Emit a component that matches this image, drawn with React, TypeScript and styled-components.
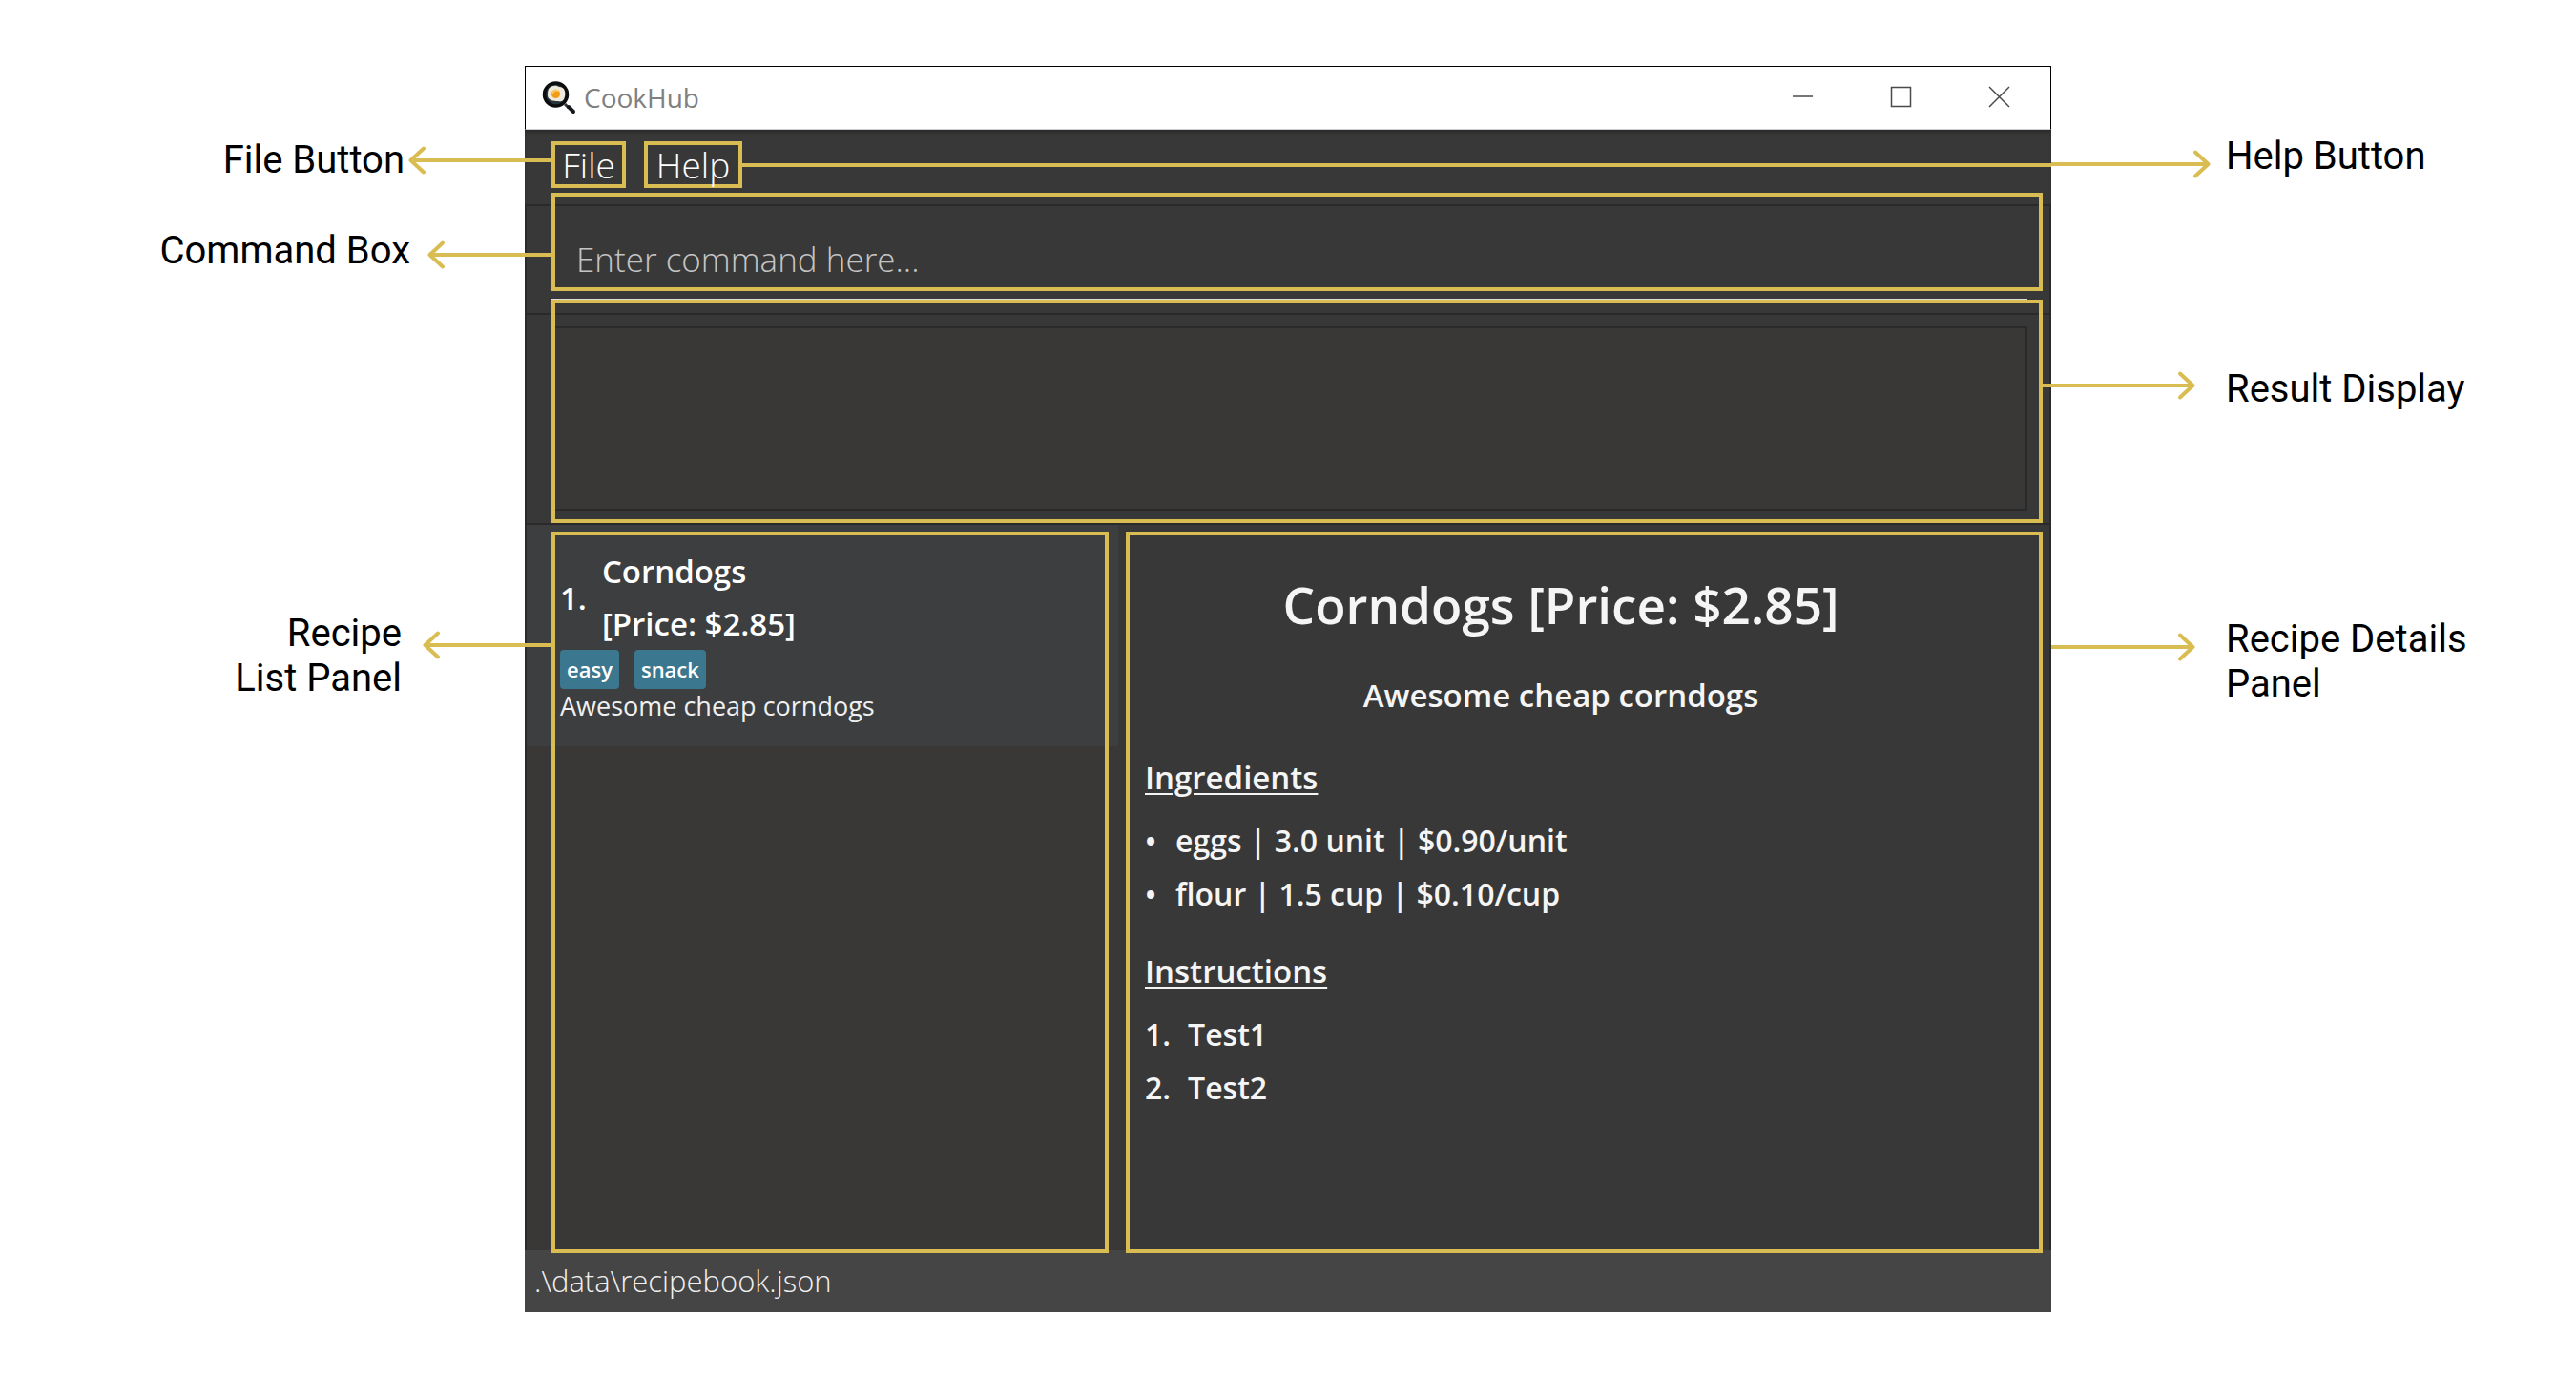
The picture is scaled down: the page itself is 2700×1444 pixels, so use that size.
import React from "react";
import styled, { createGlobalStyle } from "styled-components";

const GOLD = "#d9bd52";
const UI_FONT = `"Open Sans", "Noto Sans", sans-serif`;
const LABEL_FONT = `Roboto, "Liberation Sans", sans-serif`;

const GlobalStyle = createGlobalStyle`
  *, *::before, *::after { box-sizing: border-box; }
  body { margin: 0; background: #fff; }
  h1, h2, h3, p, ul, ol { margin: 0; padding: 0; font-size: inherit; font-weight: inherit; }
  ul, ol { list-style: none; }
  button, input, textarea { font: inherit; color: inherit; background: none; border: 0; margin: 0; padding: 0; outline: 0; }
`;

/* ---------- page and callouts ---------- */

const Page = styled.div`
  display: grid;
  grid-template-columns: 550fr 1600fr 550fr;
  min-height: 100vh;
  padding: 69px 0;
`;

const LeftNotes = styled.aside`
  display: grid;
  grid-template-rows: 95px 401px auto;
  align-content: start;
  padding-top: 75px;
  z-index: 1;
`;

const RightNotes = styled.aside`
  display: grid;
  grid-template-rows: 244px 262px auto;
  align-content: start;
  padding-top: 71px;
  z-index: 1;
`;

const Note = styled.div<{ $gap?: number }>`
  display: flex;
  align-items: flex-start;
  gap: ${(p) => p.$gap ?? 0}px;
`;

const LeftNote = styled(Note)`
  justify-content: flex-end;
  text-align: right;
`;

const NoteText = styled.p`
  font: 400 40px/47px ${LABEL_FONT};
  color: #000;
`;

const ArrowSlot = styled.div`
  flex: 0 0 183px;
  display: flex;
`;

const ArrowBox = styled.div<{ $length: number; $drop: number; $into?: number; $side: "left" | "right" }>`
  flex: none;
  display: flex;
  align-items: center;
  flex-direction: ${(p) => (p.$side === "left" ? "row" : "row-reverse")};
  width: ${(p) => p.$length + (p.$into ?? 0)}px;
  height: 32px;
  margin-top: ${(p) => p.$drop}px;
  margin-${(p) => (p.$side === "left" ? "right" : "left")}: -${(p) => p.$into ?? 0}px;

  svg {
    flex: none;
    transform: ${(p) => (p.$side === "left" ? "none" : "scaleX(-1)")};
  }
`;

const Line = styled.span`
  flex: 1;
  height: 4px;
  background: ${GOLD};
`;

type ArrowProps = { side: "left" | "right"; length: number; drop: number; into?: number };

function Arrow({ side, length, drop, into }: ArrowProps) {
  return (
    <ArrowBox $side={side} $length={length} $drop={drop} $into={into} aria-hidden>
      <svg width="18" height="32" viewBox="0 0 18 32" fill="none" stroke={GOLD} strokeWidth="4" strokeLinecap="round" strokeLinejoin="round">
        <path d="M16 3.5 2.5 16 16 28.5M3 16h15" />
      </svg>
      <Line />
    </ArrowBox>
  );
}

/* ---------- application window ---------- */

const Window = styled.main`
  display: flex;
  flex-direction: column;
  min-width: 0;
  background: #383838;
  color: #fff;
  font-family: ${UI_FONT};
`;

const TitleBar = styled.header`
  display: flex;
  align-items: center;
  height: 67px;
  padding: 0 2px 2px 17px;
  background: #fff;
  border: 1px solid #000;
  border-bottom-color: #c8ccd0;
`;

const AppName = styled.h1`
  flex: 1;
  margin-left: 8px;
  font-size: 28px;
  line-height: 40px;
  color: #808080;
`;

const WindowButton = styled.button`
  display: grid;
  place-items: center;
  width: 103px;
  height: 100%;
  color: #4a4a4a;
`;

const MenuBar = styled.nav`
  display: flex;
  align-items: center;
  height: 78px;
  padding: 0 0 5px 28px;
  box-shadow: inset 0 3px 3px #2c2c2c;
`;

const MenuButton = styled.button<{ $width: number }>`
  min-width: ${(p) => p.$width}px;
  height: 49px;
  border: 4px solid ${GOLD};
  font-size: 37px;
  line-height: 41px;
  font-weight: 300;

  & + & {
    margin-left: 19px;
  }
`;

const Pane = styled.section`
  position: relative;
  border: 2px solid #2a2a2a;
  border-bottom: 0;
`;

const Frame = styled.div<{ $inset: string }>`
  position: absolute;
  inset: ${(p) => p.$inset};
  border: 4px solid ${GOLD};
  pointer-events: none;
`;

const CommandPane = styled(Pane)`
  height: 114px;
  padding: 14px 23px 14px 26px;
`;

const CommandInput = styled.input`
  display: block;
  width: 100%;
  height: 84px;
  padding-left: 26px;
  border-bottom: 1px solid #dcdcdc;
  font-size: 35px;
  font-weight: 300;

  &::placeholder {
    color: #c4c4c4;
    opacity: 1;
  }
`;

const ResultPane = styled(Pane)`
  height: 220px;
  padding: 12px 23px 13px 26px;
`;

const ResultText = styled.textarea`
  display: block;
  width: 100%;
  height: 100%;
  border: 2px solid #2a2a2a;
  background: #393836;
  resize: none;
`;

const Split = styled.div`
  flex: 1;
  display: grid;
  grid-template-columns: 622fr 978fr;
  border-top: 2px solid #2a2a2a;
`;

const ListPanel = styled.section`
  position: relative;
  border-left: 2px solid #2a2a2a;
  background: #393836;
`;

const RecipeCard = styled.article`
  padding: 21px 12px 24px 35px;
  background: #3c3e3f;
`;

const CardHead = styled.div`
  display: flex;
  align-items: center;
  gap: 16px;
  font-size: 33px;
  line-height: 55px;
  font-weight: 600;
`;

const Tags = styled.ul`
  display: flex;
  gap: 16px;
`;

const Tag = styled.li`
  padding: 0 7px;
  border-radius: 4px;
  background: #3b778f;
  font-size: 22px;
  line-height: 41px;
  font-weight: 600;
`;

const CardText = styled.p`
  font-size: 27px;
  line-height: 36px;
  color: #f0f0f0;
`;

const DetailsPanel = styled.section`
  position: relative;
  padding: 44px 76px 44px 28px;
  border-right: 2px solid #2a2a2a;
  font-size: 33px;
  line-height: 56px;
  font-weight: 600;
  color: #f5f5f5;
`;

const RecipeTitle = styled.h2`
  font-size: 53px;
  line-height: 80px;
  text-align: center;
`;

const RecipeSummary = styled.p`
  margin: 27px 0 30px;
  text-align: center;
`;

const SectionTitle = styled.h3`
  text-decoration: underline;
  text-decoration-thickness: 2px;
  text-underline-offset: 4px;
`;

const Lines = styled.div`
  margin: 10px 0 25px;
  font-size: 32px;
`;

const Entry = styled.li<{ $gap: number }>`
  display: flex;
  gap: ${(p) => p.$gap}px;
`;

const StatusBar = styled.footer`
  height: 65px;
  padding-left: 10px;
  background: #454545;
  font-size: 31px;
  line-height: 64px;
  font-weight: 300;
  color: #f0f0f0;
`;

function PanIcon() {
  return (
    <svg width="36" height="36" viewBox="0 0 36 36" aria-hidden>
      <path d="M24 25l4 4" stroke="#33383c" strokeWidth="3" />
      <path d="M28 28l5 5" stroke="#17191b" strokeWidth="4" strokeLinecap="round" />
      <circle cx="14.500" cy="15" r="12" fill="#26343c" stroke="#0b0d0f" strokeWidth="3.500" />
      <path d="M7 9c3-4 8-4 11-2 6 0 7 6 6 10-1 5-4 6-7 5-5 0-11-1-11-6 0-2 0-5 1-7z" fill="#efe9db" />
      <circle cx="14.500" cy="14.500" r="4.500" fill="#f09a16" />
      <path d="M11.500 13c1-2 3-3 5-2" stroke="#ffc65a" strokeWidth="2" fill="none" strokeLinecap="round" />
    </svg>
  );
}

const controls = [
  { name: "Minimize", path: "M1 11h21" },
  { name: "Maximize", path: "M1.500 1.500h20v20h-20z" },
  { name: "Close", path: "M1 1l21 21M22 1L1 22" },
];

const ingredients = ["eggs | 3.0 unit | $0.90/unit", "flour | 1.5 cup | $0.10/cup"];
const instructions = ["Test1", "Test2"];

export default function App() {
  return (
    <>
      <GlobalStyle />
      <Page>
        <LeftNotes>
          <LeftNote $gap={4}>
            <NoteText>File Button</NoteText>
            <Arrow side="left" length={122} into={28} drop={8} />
          </LeftNote>
          <LeftNote $gap={18}>
            <NoteText>Command Box</NoteText>
            <Arrow side="left" length={102} into={28} drop={12} />
          </LeftNote>
          <LeftNote $gap={22}>
            <NoteText>
              Recipe
              <br />
              List Panel
            </NoteText>
            <Arrow side="left" length={107} into={28} drop={20} />
          </LeftNote>
        </LeftNotes>

        <Window>
          <TitleBar>
            <PanIcon />
            <AppName>CookHub</AppName>
            {controls.map((c) => (
              <WindowButton key={c.name} type="button" aria-label={c.name}>
                <svg width="23" height="23" viewBox="0 0 23 23" fill="none" stroke="currentColor" strokeWidth="1.500">
                  <path d={c.path} />
                </svg>
              </WindowButton>
            ))}
          </TitleBar>

          <MenuBar>
            <MenuButton type="button" $width={78}>
              File
            </MenuButton>
            <MenuButton type="button" $width={103}>
              Help
            </MenuButton>
            <Line />
          </MenuBar>

          <CommandPane>
            <CommandInput aria-label="Command" placeholder="Enter command here..." />
            <Frame $inset="-14px 7px 23px 26px" />
          </CommandPane>

          <ResultPane>
            <ResultText aria-label="Result" readOnly />
            <Frame $inset="-16px 7px 0 26px" />
          </ResultPane>

          <Split>
            <ListPanel>
              <RecipeCard>
                <CardHead>
                  <span>1.</span>
                  <h2>
                    Corndogs
                    <br />
                    [Price: $2.85]
                  </h2>
                </CardHead>
                <Tags>
                  <Tag>easy</Tag>
                  <Tag>snack</Tag>
                </Tags>
                <CardText>Awesome cheap corndogs</CardText>
              </RecipeCard>
              <Frame $inset="7px 10px -3px 26px" />
            </ListPanel>

            <DetailsPanel>
              <RecipeTitle>Corndogs [Price: $2.85]</RecipeTitle>
              <RecipeSummary>Awesome cheap corndogs</RecipeSummary>
              <SectionTitle>Ingredients</SectionTitle>
              <Lines as="ul">
                {ingredients.map((text) => (
                  <Entry key={text} $gap={20}>
                    <span>•</span>
                    {text}
                  </Entry>
                ))}
              </Lines>
              <SectionTitle>Instructions</SectionTitle>
              <Lines as="ol">
                {instructions.map((text, i) => (
                  <Entry key={text} $gap={18}>
                    <span>{i + 1}.</span>
                    {text}
                  </Entry>
                ))}
              </Lines>
              <Frame $inset="7px 7px -3px 8px" />
            </DetailsPanel>
          </Split>

          <StatusBar>.\data\recipebook.json</StatusBar>
        </Window>

        <RightNotes>
          <Note>
            <ArrowSlot>
              <Arrow side="right" length={167} drop={16} />
            </ArrowSlot>
            <NoteText>Help Button</NoteText>
          </Note>
          <Note>
            <ArrowSlot>
              <Arrow side="right" length={151} into={9} drop={4} />
            </ArrowSlot>
            <NoteText>Result Display</NoteText>
          </Note>
          <Note>
            <ArrowSlot>
              <Arrow side="right" length={151} drop={16} />
            </ArrowSlot>
            <NoteText>
              Recipe Details
              <br />
              Panel
            </NoteText>
          </Note>
        </RightNotes>
      </Page>
    </>
  );
}
